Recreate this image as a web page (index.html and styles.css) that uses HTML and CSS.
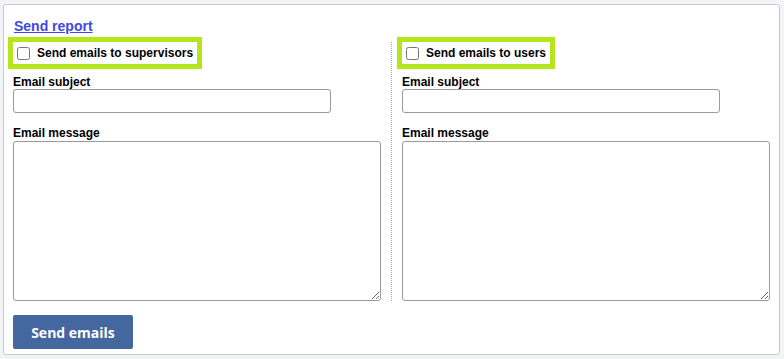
FILE: index.html
```html
<!DOCTYPE html>
<html lang="en">
<head>
<meta charset="utf-8">
<title>Send report</title>
<link rel="stylesheet" href="styles.css">
</head>
<body>
<div class="panel">
  <a class="report-link" href="#">Send report</a>
  <div class="columns">
    <div class="col">
      <label class="opt"><input type="checkbox" class="chk"><span>Send emails to supervisors</span></label>
      <label class="field-label subj">Email subject</label>
      <input type="text" class="subject">
      <label class="field-label msg">Email message</label>
      <textarea class="message"></textarea>
    </div>
    <div class="divider"></div>
    <div class="col">
      <label class="opt"><input type="checkbox" class="chk"><span>Send emails to users</span></label>
      <label class="field-label subj">Email subject</label>
      <input type="text" class="subject">
      <label class="field-label msg">Email message</label>
      <textarea class="message"></textarea>
    </div>
  </div>
  <button class="send-btn" type="button">Send emails</button>
</div>
</body>
</html>
```

FILE: styles.css
```css
html, body {
  margin: 0;
  padding: 0;
  background: #f3f4f8;
}
body {
  font-family: "Liberation Sans", Arial, sans-serif;
  color: #000;
}
.panel {
  margin: 4px 4px 0 3px;
  background: #fff;
  border: 1px solid #cacaca;
  border-radius: 3px;
  padding: 13px 9px 4px 9px;
  height: 332px;
  box-sizing: content-box;
}
.report-link {
  display: block;
  width: max-content;
  margin-left: 1px;
  font-size: 14px;
  line-height: 16px;
  font-weight: bold;
  color: #3d48e6;
  text-decoration: underline;
}
.columns {
  display: grid;
  grid-template-columns: 368px 21px 368px;
  margin-top: 8px;
}
.col {
  display: flex;
  flex-direction: column;
  align-items: flex-start;
}
.divider {
  justify-self: center;
  width: 0;
  border-left: 1px dotted #a8a8a8;
}
.opt {
  display: inline-flex;
  align-items: center;
  height: 22px;
  padding-right: 4px;
  outline: 5px solid #b5e61d;
  font-size: 12px;
  line-height: 14px;
  font-weight: bold;
}
.chk {
  width: 13px;
  height: 13px;
  margin: 0 7px 0 4px;
}
.field-label {
  display: block;
  font-size: 12px;
  line-height: 14px;
  font-weight: bold;
}
.subj {
  margin-top: 11px;
}
.msg {
  margin-top: 13px;
  margin-bottom: 1px;
}
.subject {
  box-sizing: border-box;
  width: 318px;
  height: 24px;
  margin: 0;
  border: 1px solid #9a9a9a;
  border-radius: 3px;
  padding: 2px 4px;
  font-family: "Liberation Sans", Arial, sans-serif;
}
.message {
  box-sizing: border-box;
  width: 368px;
  height: 160px;
  margin: 0;
  border: 1px solid #9a9a9a;
  border-radius: 3px;
  padding: 2px 4px;
  font-family: "Liberation Sans", Arial, sans-serif;
  display: block;
}
.send-btn {
  display: block;
  margin-top: 14px;
  width: 120px;
  height: 34px;
  border: none;
  border-radius: 2px;
  background: #44679f;
  color: #fff;
  font-family: "Open Sans", sans-serif;
  font-weight: bold;
  font-size: 14px;
  padding: 0;
}
```
